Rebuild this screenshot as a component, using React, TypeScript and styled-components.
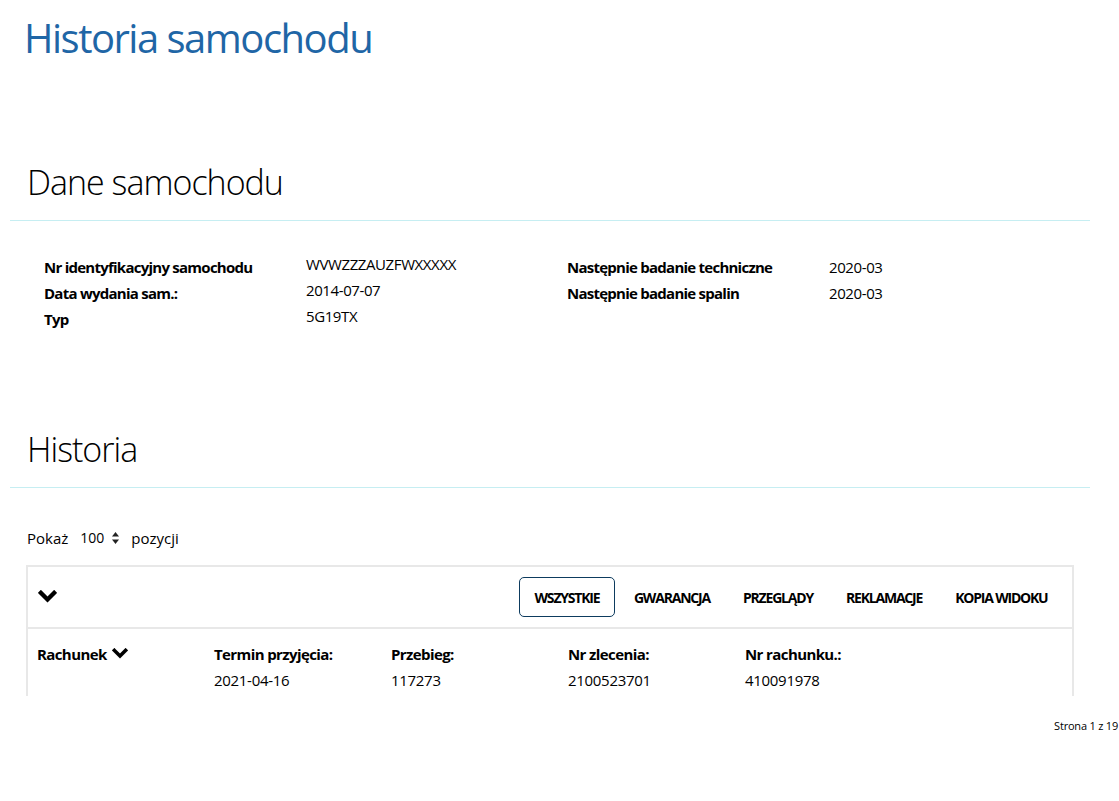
import React from "react";
import styled, { createGlobalStyle } from "styled-components";

const Global = createGlobalStyle`
  html, body { margin: 0; padding: 0; background: #fff; }
  body { font-family: "Open Sans", "Noto Sans", sans-serif; color: #000; }
  * { box-sizing: border-box; }
`;

const Page = styled.div`
  width: 1119px;
  height: 801px;
  position: relative;
  overflow: hidden;
`;

const Title = styled.h1`
  margin: 0;
  padding: 12px 0 0 24px;
  font-size: 40px;
  font-weight: 400;
  line-height: 52px;
  color: #1f66a6;
  letter-spacing: -1.5px;
`;

const Section = styled.section<{ $top: number }>`
  margin-top: ${(p) => p.$top}px;
  padding: 0 29px 0 10px;
`;

const SectionTitle = styled.h2`
  margin: 0;
  padding: 0 0 15px 17px;
  font-size: 34px;
  font-weight: 300;
  line-height: 46px;
  border-bottom: 1px solid #c6eef2;
  letter-spacing: -1px;
`;

const InfoGrid = styled.div`
  display: grid;
  grid-template-columns: 262px 261px 262px 1fr;
  padding: 33px 0 0 34px;
`;

const InfoCol = styled.div`
  display: grid;
  grid-template-columns: subgrid;
  grid-column: span 2;
  align-content: start;
`;

const Label = styled.div`
  font-size: 15px;
  font-weight: 700;
  line-height: 26px;
  letter-spacing: -0.75px;
`;

const Value = styled.div<{ $shift?: number }>`
  font-size: 15px;
  line-height: 26px;
  margin-top: ${(p) => p.$shift ?? 0}px;
  letter-spacing: -0.4px;
`;

const Controls = styled.div`
  display: flex;
  align-items: center;
  gap: 12px;
  padding: 39px 0 0 17px;
  font-size: 15px;
  line-height: 22px;
`;

const Select = styled.span`
  display: inline-flex;
  align-items: center;
  gap: 8px;
  font-size: 14px;
`;

const Table = styled.div`
  margin: 16px 0 0 16px;
  width: 1048px;
  border: 2px solid #e8e8e8;
  border-bottom: none;
`;

const Toolbar = styled.div`
  display: flex;
  align-items: center;
  height: 62px;
  padding: 0 8px 0 10px;
  border-bottom: 2px solid #e8e8e8;
`;

const Tabs = styled.div`
  margin-left: auto;
  display: flex;
  align-items: center;
`;

const Tab = styled.button<{ $active?: boolean }>`
  font-family: inherit;
  font-size: 14px;
  font-weight: 700;
  letter-spacing: -1.2px;
  color: #000;
  background: #fff;
  height: 40px;
  padding: 0 ${(p) => (p.$active ? 15 : 15.5)}px;
  border: 1.5px solid ${(p) => (p.$active ? "#0d3b5e" : "transparent")};
  border-radius: 5px;
  margin-right: ${(p) => (p.$active ? 2 : 0)}px;
  cursor: pointer;
`;

const Row = styled.div`
  display: grid;
  grid-template-columns: 177px 177px 177px 177px 1fr;
  padding: 12px 0 0 9px;
  height: 67px;
`;

const Cell = styled.div`
  display: flex;
  flex-direction: column;
`;

const CellLabel = styled.div`
  display: flex;
  align-items: center;
  gap: 5px;
  font-size: 15px;
  font-weight: 700;
  line-height: 26px;
  letter-spacing: -0.6px;
`;

const CellValue = styled.div`
  font-size: 15px;
  line-height: 26px;
  letter-spacing: -0.3px;
`;

const Pager = styled.div`
  text-align: right;
  font-size: 11px;
  padding-top: 22px;
  padding-right: 1px;
  letter-spacing: -0.2px;
`;

const Chevron = ({ size = 18 }: { size?: number }) => (
  <svg width={size} height={size * 0.7} viewBox="0 0 20 14">
    <polyline
      points="3,3 10,10 17,3"
      fill="none"
      stroke="#000"
      strokeWidth="4.5"
      strokeLinecap="square"
    />
  </svg>
);

const SortIcon = () => (
  <svg width="7" height="12" viewBox="0 0 7 12">
    <polygon points="3.5,0 7,4.5 0,4.5" fill="#222" />
    <polygon points="3.5,12 7,7.5 0,7.5" fill="#222" />
  </svg>
);

export default function App() {
  return (
    <Page>
      <Global />
      <Title>Historia samochodu</Title>
      <Section $top={95}>
        <SectionTitle>Dane samochodu</SectionTitle>
        <InfoGrid>
          <InfoCol>
            <Label>Nr identyfikacyjny samochodu</Label>
            <Value $shift={-3}>WVWZZZAUZFWXXXXX</Value>
            <Label>Data wydania sam.:</Label>
            <Value $shift={-3}>2014-07-07</Value>
            <Label>Typ</Label>
            <Value $shift={-3}>5G19TX</Value>
          </InfoCol>
          <InfoCol>
            <Label>Następnie badanie techniczne</Label>
            <Value>2020-03</Value>
            <Label>Następnie badanie spalin</Label>
            <Value>2020-03</Value>
          </InfoCol>
        </InfoGrid>
      </Section>
      <Section $top={94}>
        <SectionTitle>Historia</SectionTitle>
        <Controls>
          <span>Pokaż</span>
          <Select>
            100 <SortIcon />
          </Select>
          <span>pozycji</span>
        </Controls>
        <Table>
          <Toolbar>
            <Chevron size={19} />
            <Tabs>
              <Tab $active>WSZYSTKIE</Tab>
              <Tab>GWARANCJA</Tab>
              <Tab>PRZEGLĄDY</Tab>
              <Tab>REKLAMACJE</Tab>
              <Tab>KOPIA WIDOKU</Tab>
            </Tabs>
          </Toolbar>
          <Row>
            <Cell>
              <CellLabel>
                Rachunek <Chevron size={16} />
              </CellLabel>
            </Cell>
            <Cell>
              <CellLabel>Termin przyjęcia:</CellLabel>
              <CellValue>2021-04-16</CellValue>
            </Cell>
            <Cell>
              <CellLabel>Przebieg:</CellLabel>
              <CellValue>117273</CellValue>
            </Cell>
            <Cell>
              <CellLabel>Nr zlecenia:</CellLabel>
              <CellValue>2100523701</CellValue>
            </Cell>
            <Cell>
              <CellLabel>Nr rachunku.:</CellLabel>
              <CellValue>410091978</CellValue>
            </Cell>
          </Row>
        </Table>
      </Section>
      <Pager>Strona 1 z 19</Pager>
    </Page>
  );
}
